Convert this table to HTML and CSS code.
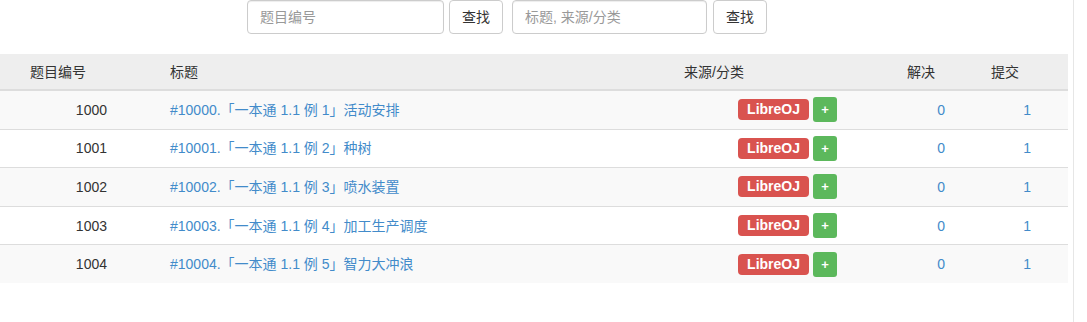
FILE: index.html
```html
<!DOCTYPE html>
<html lang="zh-CN">
<head>
<meta charset="utf-8">
<title>问题集</title>
<link rel="stylesheet" href="styles.css">
</head>
<body>
<div class="page">
  <form class="search">
    <input class="field field-id" type="text" placeholder="题目编号">
    <button class="btn btn-id" type="button">查找</button>
    <input class="field field-title" type="text" placeholder="标题, 来源/分类">
    <button class="btn" type="button">查找</button>
  </form>
  <table class="problems">
    <colgroup>
      <col class="c-id"><col class="c-title"><col class="c-src"><col class="c-ac"><col class="c-sub">
    </colgroup>
    <thead>
      <tr>
        <th class="h-id">题目编号</th>
        <th class="h-title">标题</th>
        <th class="h-src">来源/分类</th>
        <th class="h-ac">解决</th>
        <th class="h-sub">提交</th>
      </tr>
    </thead>
    <tbody>
      <tr class="odd">
        <td class="d-id">1000</td>
        <td class="d-title"><a href="#">#10000.「一本通 1.1 例 1」活动安排</a></td>
        <td class="d-src"><span class="label">LibreOJ</span><span class="plus">+</span></td>
        <td class="d-ac"><a href="#">0</a></td>
        <td class="d-sub"><a href="#">1</a></td>
      </tr>
      <tr>
        <td class="d-id">1001</td>
        <td class="d-title"><a href="#">#10001.「一本通 1.1 例 2」种树</a></td>
        <td class="d-src"><span class="label">LibreOJ</span><span class="plus">+</span></td>
        <td class="d-ac"><a href="#">0</a></td>
        <td class="d-sub"><a href="#">1</a></td>
      </tr>
      <tr class="odd">
        <td class="d-id">1002</td>
        <td class="d-title"><a href="#">#10002.「一本通 1.1 例 3」喷水装置</a></td>
        <td class="d-src"><span class="label">LibreOJ</span><span class="plus">+</span></td>
        <td class="d-ac"><a href="#">0</a></td>
        <td class="d-sub"><a href="#">1</a></td>
      </tr>
      <tr>
        <td class="d-id">1003</td>
        <td class="d-title"><a href="#">#10003.「一本通 1.1 例 4」加工生产调度</a></td>
        <td class="d-src"><span class="label">LibreOJ</span><span class="plus">+</span></td>
        <td class="d-ac"><a href="#">0</a></td>
        <td class="d-sub"><a href="#">1</a></td>
      </tr>
      <tr class="odd last">
        <td class="d-id">1004</td>
        <td class="d-title"><a href="#">#10004.「一本通 1.1 例 5」智力大冲浪</a></td>
        <td class="d-src"><span class="label">LibreOJ</span><span class="plus">+</span></td>
        <td class="d-ac"><a href="#">0</a></td>
        <td class="d-sub"><a href="#">1</a></td>
      </tr>
    </tbody>
  </table>
</div>
</body>
</html>
```
FILE: styles.css
```css
html, body {
  margin: 0;
  padding: 0;
  background: #fff;
}
body {
  font-family: "Liberation Sans", "Noto Sans CJK SC", sans-serif;
  font-size: 14px;
  line-height: 20px;
  color: #333;
}
.page {
  width: 1073px;
  min-height: 322px;
  border-right: 1px solid #e6e6e6;
}
.search {
  display: flex;
  align-items: flex-start;
  margin: 0;
  padding-left: 247px;
  height: 54px;
}
.field {
  box-sizing: border-box;
  height: 34px;
  padding: 6px 12px;
  border: 1px solid #ccc;
  border-radius: 4px;
  font-family: inherit;
  font-size: 14px;
  color: #555;
  background: #fff;
  box-shadow: inset 0 1px 1px rgba(0,0,0,.075);
  outline: none;
}
.field::placeholder {
  color: #999;
}
.field-id {
  width: 197px;
  margin-right: 5px;
}
.field-title {
  width: 195px;
  margin-right: 6px;
}
.btn {
  box-sizing: border-box;
  height: 34px;
  padding: 6px 12px;
  border: 1px solid #ccc;
  border-radius: 4px;
  background: #fff;
  color: #333;
  font-family: inherit;
  font-size: 14px;
  line-height: 20px;
}
.btn-id {
  margin-right: 9px;
}
.problems {
  width: 1068px;
  table-layout: fixed;
  border-collapse: collapse;
  border-spacing: 0;
}
.c-id { width: 162px; }
.c-title { width: 514px; }
.c-src { width: 169px; }
.c-ac { width: 110px; }
.c-sub { width: 113px; }
.problems th {
  height: 35px;
  padding: 0;
  background: #eee;
  border-bottom: 2px solid #ddd;
  font-weight: normal;
  text-align: left;
  vertical-align: middle;
  color: #333;
}
.h-id { padding-left: 30px !important; }
.h-title { padding-left: 8px !important; }
.h-src { padding-left: 8px !important; }
.h-ac { padding-left: 62px !important; }
.h-sub { padding-left: 36px !important; }
.problems td {
  height: 37.6px;
  padding: 0;
  border-bottom: 1px solid #ddd;
  vertical-align: middle;
  white-space: nowrap;
}
.problems tr.odd td {
  background: #f9f9f9;
}
.problems tr.last td {
  border-bottom: 0;
}
.problems a {
  color: #428bca;
  text-decoration: none;
}
.d-id {
  text-align: right;
  padding-right: 55px !important;
}
.d-title {
  padding-left: 8px !important;
}
.d-src {
  text-align: right;
  padding-right: 8px !important;
  font-size: 0;
}
.d-ac {
  text-align: right;
  padding-right: 10px !important;
}
.d-sub {
  text-align: right;
  padding-right: 37px !important;
}
.label {
  display: inline-block;
  vertical-align: middle;
  padding: 3px 9px 4px;
  font-size: 14px;
  line-height: 14px;
  font-weight: bold;
  color: #fff;
  background: #d9534f;
  border-radius: 4px;
}
.plus {
  display: inline-block;
  vertical-align: middle;
  box-sizing: border-box;
  width: 24px;
  height: 25px;
  margin-left: 4px;
  border-radius: 3px;
  background: #5cb85c;
  color: #fff;
  font-size: 13px;
  font-weight: bold;
  line-height: 25px;
  text-align: center;
}
```
